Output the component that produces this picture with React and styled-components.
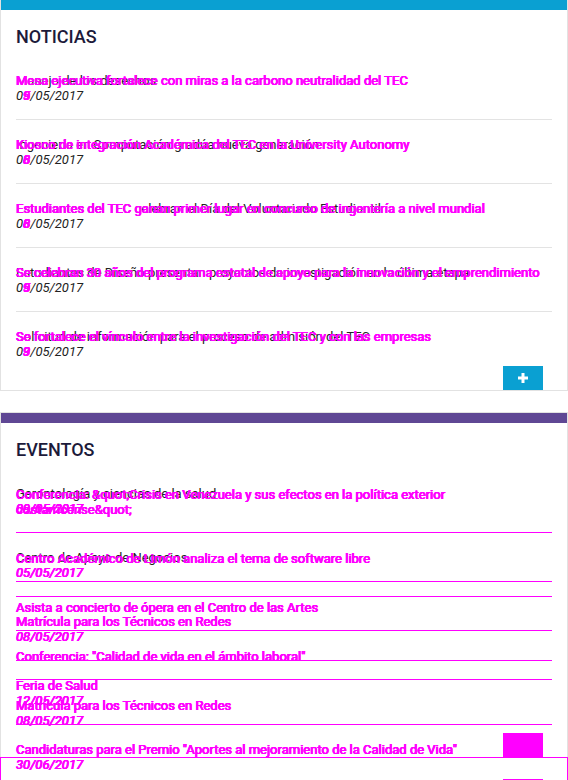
import React from "react";
import styled, { createGlobalStyle } from "styled-components";

const MAGENTA = "#ff00ff";
const INK = "#222222";

const noticias = [
  {
    a: "Manejo de los desechos",
    b: "Mesa ejecutiva fortalece con miras a la carbono neutralidad del TEC",
    d: ["9", "5"],
  },
  {
    a: "Ingeniería en Computación gradúa nueva generación",
    b: "Kiosco de integración Académica del TEC en la University Autonomy",
    d: ["8", "6"],
  },
  {
    a: "Estudiantes del TEC celebran el Día del Voluntariado Estudiantil",
    b: "Estudiantes del TEC ganan primer lugar en concurso de ingeniería a nivel mundial",
    d: ["8", "6"],
  },
  {
    a: "Estudiantes de Diseño presentan proyectos de investigación en la última etapa",
    b: "Se celebran 30 años del programa estatal de apoyo para la innovación y el emprendimiento",
    d: ["9", "5"],
  },
  {
    a: "Solicitud de información para el proceso de admisión del TEC",
    b: "Se fortalece el vínculo entre la investigación del TEC y con las empresas",
    d: ["9", "3"],
  },
];

const eventos = [
  { title: "Gerontología y ciencias de la salud", ink: true, date: "09/05/2017" },
  { title: "Centro de Apoyo de Negocios", ink: true, date: "05/05/2017" },
  { title: "Matrícula para los Técnicos en Redes", date: "08/05/2017" },
  { title: "Feria de Salud", date: "12/05/2017" },
  {
    title: "Candidaturas para el Premio \"Aportes al mejoramiento de la Calidad de Vida\"",
    date: "30/06/2017",
  },
];

const eventosShift = [
  {
    title:
      "Conferencia: &quot;Crisis en Venezuela y sus efectos en la política exterior costarricense&quot;",
  },
  { title: "Centro Académico de Limón analiza el tema de software libre" },
  { title: "Asista a concierto de ópera en el Centro de las Artes" },
  { title: "Conferencia: \"Calidad de vida en el ámbito laboral\"" },
  { title: "Matrícula para los Técnicos en Redes", date: "08/05/2017" },
];

function PlusIcon() {
  return (
    <svg width="12" height="12" viewBox="0 0 12 12">
      <path d="M6 1v10M1 6h10" stroke="#fff" strokeWidth="3" fill="none" />
    </svg>
  );
}

function SplitDate({ digits }) {
  return (
    <DateLine>
      0
      <Digit>
        {digits[0]}
        <DigitOver>{digits[1]}</DigitOver>
      </Digit>
      /05/2017
    </DateLine>
  );
}

export default function App() {
  return (
    <>
      <GlobalStyle />
      <Page>
        <Card $bar="#0aa0d2">
          <Heading>NOTICIAS</Heading>
          <List>
            {noticias.map((n) => (
              <Item key={n.b}>
                <ItemTitle>
                  {n.a}
                  <Overlay>{n.b}</Overlay>
                </ItemTitle>
                <SplitDate digits={n.d} />
              </Item>
            ))}
          </List>
          <Footer>
            <AddButton>
              <PlusIcon />
            </AddButton>
          </Footer>
        </Card>

        <Card $bar="#5f4794">
          <Heading>EVENTOS</Heading>
          <List>
            {eventos.map((e) => (
              <Item key={e.title} $rule={MAGENTA}>
                <ItemTitle $ghost={!e.ink}>{e.title}</ItemTitle>
                <DateLine $ghost>{e.date}</DateLine>
              </Item>
            ))}
          </List>
          <Footer>
            <AddButton $ghost />
          </Footer>

          <GhostLayer>
            <GhostBody>
              {eventosShift.map((e) => (
                <GhostItem key={e.title} $rule={MAGENTA}>
                  <ItemTitle $ghost>{e.title}</ItemTitle>
                  {e.date && <DateLine $ghost>{e.date}</DateLine>}
                </GhostItem>
              ))}
              <Footer>
                <AddButton $ghost />
              </Footer>
            </GhostBody>
            <GhostTail />
          </GhostLayer>
        </Card>
      </Page>
    </>
  );
}

// Styled Components
const GlobalStyle = createGlobalStyle`
  html, body {
    margin: 0;
    padding: 0;
    background: #fff;
    overflow: hidden;
  }
  body {
    font-family: Roboto, "Liberation Sans", Arial, sans-serif;
  }
`;

const Page = styled.div`
  width: 568px;
  display: flex;
  flex-direction: column;
  gap: 21px;
  margin-top: -1px;
`;

const Card = styled.section`
  position: relative;
  border: 1px solid #e2e2e2;
  background: #fff;
  &::before {
    content: "";
    display: block;
    height: 10px;
    background: ${(p) => p.$bar};
  }
`;

const Heading = styled.h2`
  margin: 16px 15px 9px;
  font-size: 18px;
  line-height: 21px;
  font-weight: 500;
  color: #1c1a3a;
`;

const List = styled.ul`
  list-style: none;
  margin: 0;
  padding: 0 15px;
`;

const Item = styled.li`
  padding: 17px 0 16px;
  border-bottom: 1px solid ${(p) => p.$rule || "#e3e3e3"};
  &:last-child {
    padding-bottom: 7px;
    border-bottom: 0;
  }
`;

const ghostText = `
  color: ${MAGENTA};
  text-shadow: 0.5px 0 0 ${MAGENTA}, -0.5px 0 0 ${MAGENTA}, 0 0.4px 0 ${MAGENTA};
`;

const ItemTitle = styled.div`
  position: relative;
  font-size: 13px;
  line-height: 15px;
  color: ${INK};
  ${(p) => (p.$ghost ? ghostText : "")}
`;

const Overlay = styled.span`
  position: absolute;
  left: 0;
  top: 0;
  width: 100%;
  ${ghostText}
`;

const DateLine = styled.div`
  font-size: 13px;
  line-height: 15px;
  font-style: italic;
  color: ${INK};
  ${(p) => (p.$ghost ? ghostText : "")}
`;

const Digit = styled.span`
  position: relative;
  ${ghostText}
`;

const DigitOver = styled.span`
  position: absolute;
  left: 0;
  top: 0;
`;

const Footer = styled.div`
  display: flex;
  justify-content: flex-end;
  padding: 0 24px 0 15px;
`;

const AddButton = styled.button`
  width: 40px;
  height: 24px;
  border: 0;
  padding: 0;
  margin: 0;
  display: flex;
  align-items: center;
  justify-content: center;
  background: ${(p) => (p.$ghost ? MAGENTA : "#0aa0d2")};
  cursor: pointer;
`;

const GhostLayer = styled.div`
  position: absolute;
  top: 56px;
  left: -1px;
  right: -1px;
  bottom: -1px;
  display: flex;
  flex-direction: column;
  pointer-events: none;
`;

const GhostBody = styled.div`
  border-bottom: 1px solid ${MAGENTA};
  & > ${Footer} {
    padding-right: 25px;
  }
`;

const GhostItem = styled(Item).attrs({ as: "div" })`
  margin: 0 16px;
  padding: 18px 0 15px;
  &:nth-last-child(2) {
    padding-bottom: 5px;
    border-bottom: 0;
  }
`;

const GhostTail = styled.div`
  flex: 1;
  border-left: 1px solid ${MAGENTA};
  border-right: 1px solid ${MAGENTA};
`;
